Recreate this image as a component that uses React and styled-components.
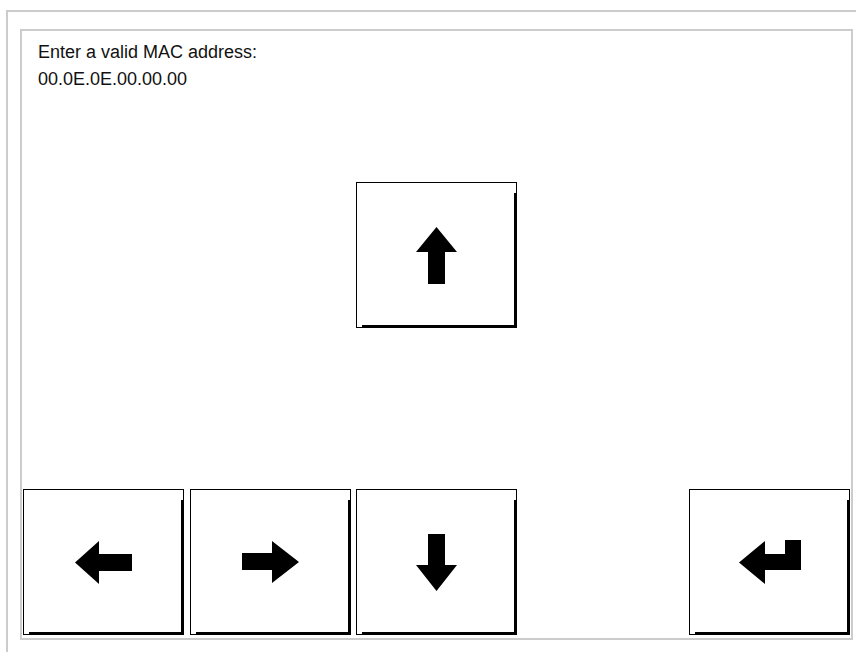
import React from "react";
import styled, { createGlobalStyle } from "styled-components";

const GlobalStyle = createGlobalStyle`
  html, body {
    margin: 0;
    padding: 0;
    background: #ffffff;
  }
  body {
    font-family: "Liberation Sans", Arial, sans-serif;
    overflow: hidden;
  }
`;

const keys = [
  { id: "up", row: 1, col: 3 },
  { id: "left", row: 3, col: 1 },
  { id: "right", row: 3, col: 2 },
  { id: "down", row: 3, col: 3 },
  { id: "enter", row: 3, col: 5 },
];

//arrow drawings, sized as measured in the panel
const Arrow = ({ dir }) => {
  if (dir === "up")
    return (
      <svg width="41" height="57" viewBox="0 0 41 57">
        <polygon points="20.5,0 41,25 29,25 29,57 12,57 12,25 0,25" fill="#000" />
      </svg>
    );
  if (dir === "down")
    return (
      <svg width="41" height="57" viewBox="0 0 41 57">
        <polygon points="12,0 29,0 29,31 41,31 20.5,57 0,31 12,31" fill="#000" />
      </svg>
    );
  if (dir === "left")
    return (
      <svg width="57" height="43" viewBox="0 0 57 43">
        <polygon points="0,21.5 24,0 24,13 57,13 57,30 24,30 24,43" fill="#000" />
      </svg>
    );
  if (dir === "right")
    return (
      <svg width="57" height="42" viewBox="0 0 57 42">
        <polygon points="57,21 30,0 30,12 0,12 0,29 30,29 30,42" fill="#000" />
      </svg>
    );
  return (
    <svg width="62" height="44" viewBox="0 0 62 44">
      <polygon
        points="0,22.5 26,1 26,14 46,14 46,0 62,0 62,30 26,30 26,44"
        fill="#000"
      />
    </svg>
  );
};

const App = () => {
  return (
    <>
      <GlobalStyle />
      <Screen>
        <Panel>
          <Message>
            Enter a valid MAC address:
            <br />
            00.0E.0E.00.00.00
          </Message>
          <Keypad>
            {keys.map((k) => (
              <Key key={k.id} row={k.row} col={k.col} aria-label={k.id}>
                <Arrow dir={k.id} />
              </Key>
            ))}
          </Keypad>
        </Panel>
      </Screen>
    </>
  );
};

const Screen = styled.div`
  margin: 10px 0 0 6px;
  height: 642px;
  box-sizing: border-box;
  border-top: 2px solid #cccccc;
  border-left: 2px solid #cccccc;
  padding: 17px 3px 12px 12px;
`;

const Panel = styled.div`
  height: 611px;
  box-sizing: border-box;
  border: 2px solid #cccccc;
  display: flex;
  flex-direction: column;
`;

const Message = styled.div`
  padding: 8px 16px 0;
  font-size: 18px;
  line-height: 27px;
  color: #111111;
`;

const Keypad = styled.div`
  margin-top: auto;
  padding: 0 1px 3px 1px;
  display: grid;
  grid-template-columns: repeat(5, 161px);
  grid-template-rows: repeat(3, 146px);
  column-gap: 5.5px;
  row-gap: 7.5px;
`;

const Key = styled.button`
  grid-row: ${({ row }) => row - 0};
  grid-column: ${({ col }) => col};
  position: relative;
  box-sizing: border-box;
  margin: 0;
  padding: 0;
  background: #ffffff;
  border: 1px solid #000000;
  border-radius: 0;
  display: flex;
  align-items: center;
  justify-content: center;
  cursor: pointer;

  &::after {
    content: "";
    position: absolute;
    top: 10px;
    right: 0;
    bottom: 0;
    width: 2px;
    background: #000000;
  }

  &::before {
    content: "";
    position: absolute;
    left: 5px;
    right: 0;
    bottom: 0;
    height: 2px;
    background: #000000;
  }
`;

export default App;
